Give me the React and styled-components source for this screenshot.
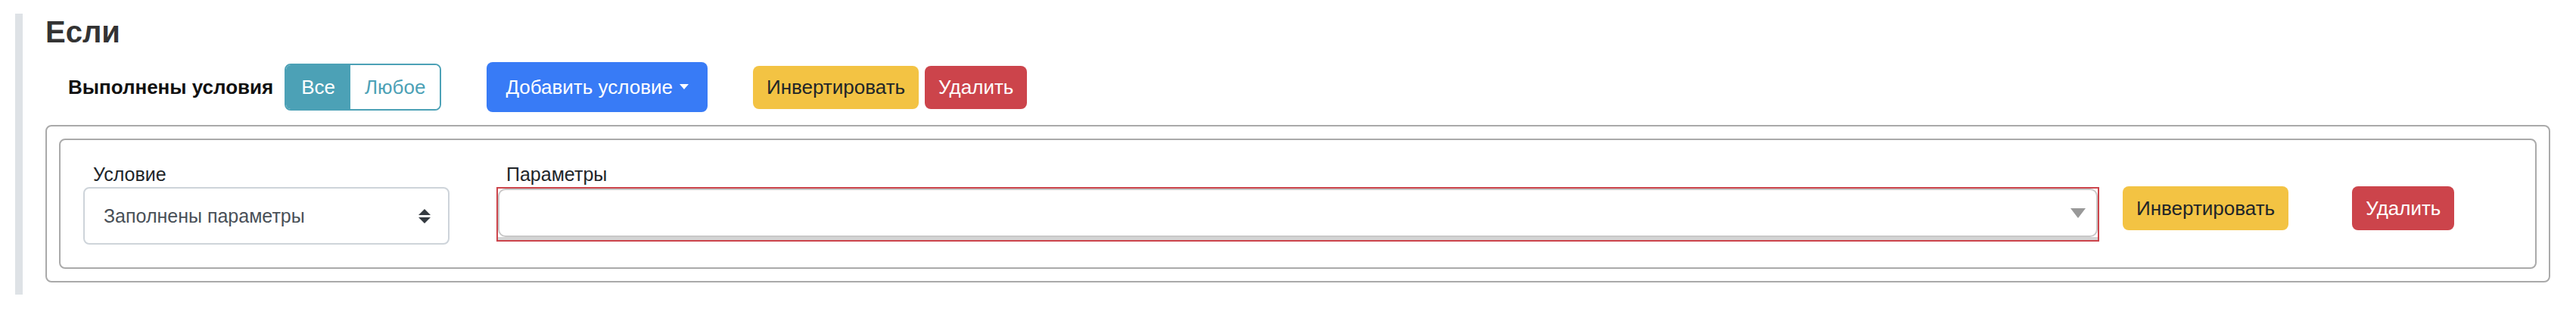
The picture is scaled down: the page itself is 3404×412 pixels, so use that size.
import React from "react";
import styled, { createGlobalStyle, css } from "styled-components";

const GlobalStyle = createGlobalStyle`
  html, body {
    margin: 0;
    padding: 0;
    background: #ffffff;
  }
  body {
    font-family: "Liberation Sans", Arial, Helvetica, sans-serif;
    color: #212529;
  }
  * { box-sizing: border-box; }
`;

const Page = styled.div`
  padding: 18px 34px 0 20px;
`;

const Section = styled.section`
  border-left: 10px solid #dee2e6;
  padding: 0 0 16px 30px;
`;

const Heading = styled.h5`
  margin: 0;
  font-size: 40px;
  line-height: 48px;
  font-weight: 700;
  color: #333333;
`;

const Toolbar = styled.div`
  margin-top: 16px;
  height: 66px;
  display: flex;
  align-items: center;
  padding-left: 30px;
`;

const MatchLabel = styled.span`
  font-size: 26px;
  font-weight: 700;
  color: #111111;
  margin-right: 15px;
  white-space: nowrap;
`;

const ButtonGroup = styled.div`
  display: flex;
  height: 62px;
  border: 2px solid #4ca1b6;
  border-radius: 8px;
  overflow: hidden;
`;

const SegButton = styled.button`
  border: 0;
  margin: 0;
  font-family: inherit;
  font-size: 26px;
  padding: 0 ${(p) => (p.$active ? 20 : 19)}px;
  display: inline-flex;
  align-items: center;
  cursor: pointer;
  background: ${(p) => (p.$active ? "#4ca1b6" : "#ffffff")};
  color: ${(p) => (p.$active ? "#ffffff" : "#4ca1b6")};
`;

const variants = {
  primary: css`
    background: #387bf6;
    color: #ffffff;
  `,
  warning: css`
    background: #f3c343;
    color: #212529;
  `,
  danger: css`
    background: #cc444b;
    color: #ffffff;
  `,
};

const Button = styled.button`
  border: 0;
  margin: 0 0 0 ${(p) => p.$gap || 0}px;
  font-family: inherit;
  font-size: 26px;
  height: ${(p) => p.$height || 57}px;
  padding: 0 ${(p) => p.$padX || 18}px;
  border-radius: 8px;
  display: inline-flex;
  align-items: center;
  white-space: nowrap;
  cursor: pointer;
  ${(p) => variants[p.$variant]}
`;

const Caret = styled.span`
  display: inline-block;
  margin-left: 9px;
  width: 0;
  height: 0;
  border-left: 6px solid transparent;
  border-right: 6px solid transparent;
  border-top: 7px solid currentColor;
  transform: translateY(-1px);
`;

const OuterCard = styled.div`
  margin-top: 17px;
  border: 2px solid #aaaaaa;
  border-radius: 8px;
  padding: 16px;
`;

const InnerCard = styled.div`
  border: 2px solid #aaaaaa;
  border-radius: 8px;
  padding: 30px;
`;

const ConditionRow = styled.div`
  display: flex;
  align-items: flex-start;
`;

const Field = styled.div`
  flex: 0 0 ${(p) => p.$width}px;
  margin-left: ${(p) => p.$gap || 0}px;
  display: flex;
  flex-direction: column;
`;

const FieldLabel = styled.label`
  display: block;
  font-size: 25px;
  line-height: 30px;
  color: #212529;
  padding-left: 13px;
`;

const SelectBox = styled.div`
  margin-top: 2px;
  height: 76px;
  border: 2px solid #ced4da;
  border-radius: 8px;
  background: #ffffff;
  display: flex;
  align-items: center;
  justify-content: space-between;
  padding: 0 23px 0 25px;
  font-size: 25px;
  color: #495057;
`;

const ParamsFrame = styled.div`
  margin-top: 2px;
  border: 2px solid #cc444b;
  background: #ffffff;
  display: flex;
  flex-direction: column;
`;

const ParamsBox = styled.div`
  height: 64px;
  border: 2px solid #c8c8c8;
  border-radius: 10px;
  background: #ffffff;
  display: flex;
  align-items: center;
  justify-content: flex-end;
  padding-right: 14px;
`;

const ParamsBand = styled.div`
  height: 4px;
  background: #d3d3d3;
`;

const ButtonCell = styled.div`
  margin-left: ${(p) => p.$gap}px;
  padding-top: 31px;
  display: flex;
`;

const SortIcon = () => (
  <svg width="16" height="19" viewBox="0 0 16 19" aria-hidden="true">
    <polygon points="8,0 16,8 0,8" fill="#343a40" />
    <polygon points="0,11 16,11 8,19" fill="#343a40" />
  </svg>
);

const DownArrow = () => (
  <svg width="20" height="13" viewBox="0 0 20 13" aria-hidden="true">
    <polygon points="0,0 20,0 10,13" fill="#999999" />
  </svg>
);

export default function App() {
  return (
    <>
      <GlobalStyle />
      <Page>
        <Section>
          <Heading>Если</Heading>
          <Toolbar>
            <MatchLabel>Выполнены условия</MatchLabel>
            <ButtonGroup>
              <SegButton $active>Все</SegButton>
              <SegButton>Любое</SegButton>
            </ButtonGroup>
            <Button $variant="primary" $gap={60} $height={66} $padX={25}>
              Добавить условие
              <Caret />
            </Button>
            <Button $variant="warning" $gap={60}>
              Инвертировать
            </Button>
            <Button $variant="danger" $gap={8}>
              Удалить
            </Button>
          </Toolbar>
          <OuterCard>
            <InnerCard>
              <ConditionRow>
                <Field $width={484}>
                  <FieldLabel>Условие</FieldLabel>
                  <SelectBox>
                    <span>Заполнены параметры</span>
                    <SortIcon />
                  </SelectBox>
                </Field>
                <Field $width={2118} $gap={62}>
                  <FieldLabel>Параметры</FieldLabel>
                  <ParamsFrame>
                    <ParamsBox>
                      <DownArrow />
                    </ParamsBox>
                    <ParamsBand />
                  </ParamsFrame>
                </Field>
                <ButtonCell $gap={31}>
                  <Button $variant="warning" $height={58}>
                    Инвертировать
                  </Button>
                </ButtonCell>
                <ButtonCell $gap={84}>
                  <Button $variant="danger" $height={58}>
                    Удалить
                  </Button>
                </ButtonCell>
              </ConditionRow>
            </InnerCard>
          </OuterCard>
        </Section>
      </Page>
    </>
  );
}
